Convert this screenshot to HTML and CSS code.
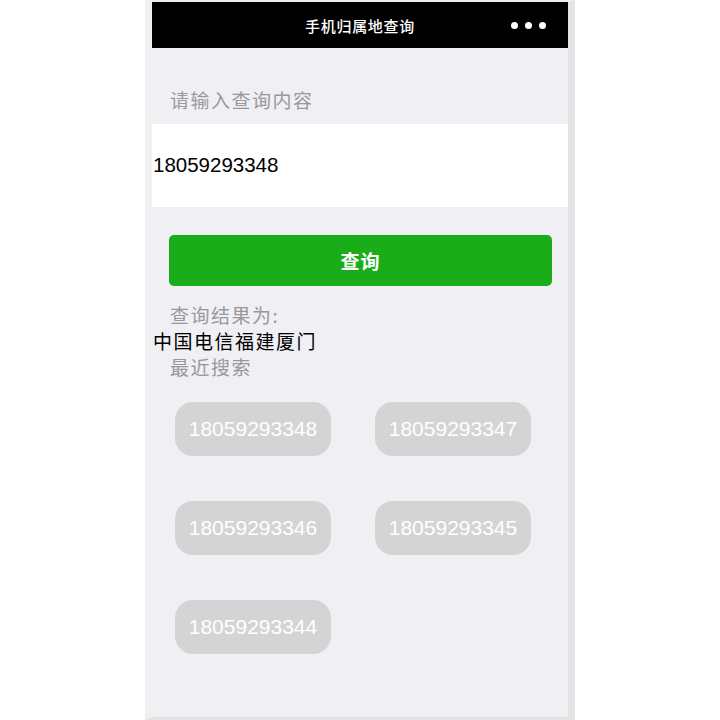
FILE: index.html
```html
<!DOCTYPE html>
<html lang="zh-CN">
<head>
<meta charset="utf-8">
<title>手机归属地查询</title>
<link rel="stylesheet" href="styles.css">
</head>
<body>
<div class="phone">
  <header class="nav">
    <span class="nav-title">手机归属地查询</span>
    <span class="nav-more"><i></i><i></i><i></i></span>
  </header>
  <main class="content">
    <div class="label">请输入查询内容</div>
    <div class="input-row">18059293348</div>
    <button class="btn">查询</button>
    <div class="muted">查询结果为:</div>
    <div class="result">中国电信福建厦门</div>
    <div class="muted">最近搜索</div>
    <div class="chips">
      <div class="chip">18059293348</div>
      <div class="chip">18059293347</div>
      <div class="chip">18059293346</div>
      <div class="chip">18059293345</div>
      <div class="chip">18059293344</div>
    </div>
  </main>
</div>
</body>
</html>
```
FILE: styles.css
```css
* { box-sizing: border-box; }
html, body {
  margin: 0;
  padding: 0;
  background: #ffffff;
  font-family: "Liberation Sans", "Noto Sans CJK SC", sans-serif;
}
.phone {
  width: 430px;
  height: 720px;
  margin: 0 auto;
  border-style: solid;
  border-color: #eeeeee #e4e4e4 #e2e2e2 #f0f0f0;
  border-width: 2px 7px 3px 7px;
  display: flex;
  flex-direction: column;
  background: #efeff4;
  box-shadow: inset 0 0 0 1px #e6e6e6;
}
.nav {
  height: 46px;
  background: #000;
  position: relative;
  display: flex;
  align-items: center;
  justify-content: center;
  flex-shrink: 0;
}
.nav-title {
  color: #fff;
  font-family: "Noto Sans CJK SC", sans-serif;
  font-size: 15px;
  font-weight: 500;
  letter-spacing: 0.7px;
}
.nav-more {
  position: absolute;
  right: 22px;
  top: 20px;
  display: flex;
  gap: 7px;
}
.nav-more i {
  display: block;
  width: 7px;
  height: 7px;
  border-radius: 50%;
  background: #fff;
}
.content {
  flex: 1;
  background: #efeff4;
}
.label {
  padding: 39px 18px 11px;
  line-height: 26px;
  font-size: 19px;
  letter-spacing: 1.5px;
  color: #999;
  font-family: "Noto Sans CJK SC", sans-serif;
}
.input-row {
  height: 83px;
  background: #fff;
  display: flex;
  align-items: center;
  padding-left: 1px;
  padding-bottom: 2px;
  font-size: 20.5px;
  color: #000;
}
.btn {
  display: block;
  width: 383px;
  height: 51px;
  margin: 28px 0 0 17px;
  border: none;
  border-radius: 5px;
  background: #1aad19;
  color: #fff;
  font-family: "Noto Sans CJK SC", sans-serif;
  font-size: 19px;
  font-weight: 700;
  letter-spacing: 1px;
  padding: 0;
}
.muted {
  padding-left: 18px;
  line-height: 26px;
  font-size: 19px;
  letter-spacing: 1.5px;
  color: #999;
  font-family: "Noto Sans CJK SC", sans-serif;
}
.btn + .muted { margin-top: 16px; }
.result {
  padding-left: 1px;
  line-height: 26px;
  font-size: 19px;
  letter-spacing: 1.5px;
  color: #000;
  font-family: "Noto Sans CJK SC", sans-serif;
}
.chips {
  display: grid;
  grid-template-columns: 156px 156px;
  column-gap: 44px;
  row-gap: 45px;
  padding: 22px 0 0 23px;
}
.chip {
  height: 54px;
  line-height: 54px;
  border-radius: 18px;
  background: #d4d4d4;
  color: #fff;
  font-size: 21px;
  text-align: center;
}
```
